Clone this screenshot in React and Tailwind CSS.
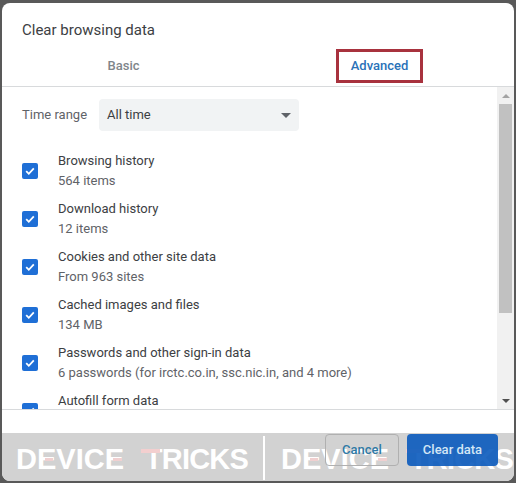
const rows = [
  ["Browsing history", "564 items"],
  ["Download history", "12 items"],
  ["Cookies and other site data", "From 963 sites"],
  ["Cached images and files", "134 MB"],
  ["Passwords and other sign-in data", "6 passwords (for irctc.co.in, ssc.nic.in, and 4 more)"],
  ["Autofill form data", ""],
];

function Check() {
  return (
    <span className="flex h-4 w-4 shrink-0 items-center justify-center rounded-[2px] bg-[#1f6fd6]">
      <svg width="12" height="12" viewBox="0 0 12 12" fill="none">
        <path d="M2.2 6.2 L4.8 8.8 L9.8 3.4" stroke="white" strokeWidth="1.8" />
      </svg>
    </span>
  );
}

function Watermark() {
  return (
    <span className="relative mt-[2px] flex w-[232px] shrink-0 justify-between text-[29px] leading-none font-bold text-white [font-family:'Liberation_Sans',sans-serif]">
      <span>DEVICE</span>
      <span className="tracking-[-0.8px]">TRICKS</span>
      <span className="absolute top-[13px] left-[29px] h-[3px] w-[8px] bg-[#f0d0d0]" />
      <span className="absolute top-[13px] left-[97px] h-[3px] w-[9px] bg-[#f0d0d0]" />
      <span className="absolute top-[4px] left-[125px] h-[4px] w-[19px] bg-[#f3cfcf]" />
    </span>
  );
}

export default function App() {
  return (
    <div className="h-[483px] w-[516px] overflow-hidden bg-[#595959] pt-[3px] pr-[2px] pb-[2px] pl-[2px] [font-family:Roboto,sans-serif]">
      <div className="relative flex h-[478px] flex-col overflow-hidden rounded-lg bg-white">
        <h1 className="px-5 pt-[18px] text-[15px] leading-[18px] text-[#3c4043]">Clear browsing data</h1>
        <div className="grid h-[48px] shrink-0 grid-cols-2 border-b border-[#d8dadc] pt-[7px] text-[13px] font-medium">
          <div className="flex items-center justify-center pr-[13px] pb-[1px] text-[#80868b]">Basic</div>
          <div className="flex items-center justify-center">
            <span className="mr-[13px] flex h-[34px] w-[87px] items-center justify-center border-[3px] border-[#a8323e] pb-[1px] text-[#2a72b8]">Advanced</span>
          </div>
        </div>
        <div className="flex h-[323px] shrink-0 border-b border-[#d8dadc]">
          <div className="min-w-0 flex-1 overflow-hidden pl-5">
            <div className="mt-3 mb-4 flex items-center">
              <span className="w-[77px] text-[13px] text-[#5f6368]">Time range</span>
              <div className="flex h-8 w-[200px] items-center justify-between rounded bg-[#f1f3f4] pr-2 pl-2 text-[13px] text-[#3c4043]">
                All time
                <span className="h-0 w-0 border-x-[5px] border-t-[5px] border-x-transparent border-t-[#5f6368]" />
              </div>
            </div>
            {rows.map(([a, b]) => (
              <div key={a} className="flex h-12 items-center">
                <Check />
                <div className="ml-5 text-[13px] leading-5">
                  <div className="text-[#3c4043]">{a}</div>
                  <div className="h-5 text-[#5f6368]">{b}</div>
                </div>
              </div>
            ))}
          </div>
          <div className="flex w-[17px] shrink-0 flex-col items-center bg-[#f1f1f1]">
            <div className="flex h-[17px] shrink-0 items-center justify-center">
              <span className="h-0 w-0 border-x-[4px] border-b-[4px] border-x-transparent border-b-[#a3a3a3]" />
            </div>
            <div className="h-[209px] w-[13px] bg-[#c1c1c1]" />
            <div className="flex-1" />
            <div className="flex h-[17px] shrink-0 items-center justify-center">
              <span className="h-0 w-0 border-x-[4px] border-t-[4px] border-x-transparent border-t-[#505050]" />
            </div>
          </div>
        </div>
        <div className="h-[23px] shrink-0" />
        <div className="flex flex-1 items-start justify-end gap-2 bg-[#d2d2d2] pt-[1px] pr-4 text-[13px] font-medium">
          <button className="relative z-10 flex h-8 w-[74px] items-center justify-center rounded border border-[#b0b0b0] text-[#2f7aa6]">Cancel</button>
          <button className="relative z-10 flex h-8 w-[91px] items-center justify-center rounded bg-[#0a5abc]/90 text-[#d3e6f5]">Clear data</button>
        </div>
        <div className="pointer-events-none absolute bottom-[1px] left-[14px] flex h-[44px] w-[600px] items-center">
          <Watermark />
          <span className="mr-[16px] ml-[15px] h-[44px] w-[2px] shrink-0 bg-white" />
          <Watermark />
        </div>
      </div>
    </div>
  );
}
